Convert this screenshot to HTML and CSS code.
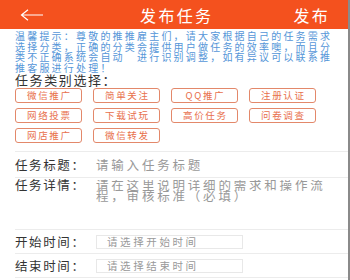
FILE: index.html
```html
<!DOCTYPE html>
<html lang="zh-CN">
<head>
<meta charset="UTF-8">
<meta name="viewport" content="width=device-width, initial-scale=1.0">
<title>发布任务</title>
<link rel="stylesheet" href="styles.css">
</head>
<body>
    <div class="page">
        <!-- 顶部导航 -->
        <div class="topbar">
            <span class="back">
                <svg width="24" height="12" viewBox="0 0 24 12">
                    <path d="M23 6H1.5M8 0.8L1.5 6L8 11.2" fill="none" stroke="#fff" stroke-width="1.2"/>
                </svg>
            </span>
            <span class="topbar-title">发布任务</span>
            <span class="topbar-action">发布</span>
        </div>

        <!-- 温馨提示 -->
        <p class="notice">温馨提示：尊敬的推推雇主们，请大家根据自己的任务需求选择分类，正确的分类会提供用户做任务的效率噢，而且分类不正确系统会自动　进行识别调整，如有异议可以联系推推客服进行处理！</p>

        <!-- 任务类别 -->
        <div class="category">
            <div class="category-title">任务类别选择：</div>
            <div class="tags">
                <span class="tag">微信推广</span>
                <span class="tag">简单关注</span>
                <span class="tag">QQ推广</span>
                <span class="tag">注册认证</span>
                <span class="tag">网络投票</span>
                <span class="tag">下载试玩</span>
                <span class="tag">高价任务</span>
                <span class="tag">问卷调查</span>
                <span class="tag">网店推广</span>
                <span class="tag">微信转发</span>
            </div>
        </div>

        <!-- 表单 -->
        <div class="row row-title">
            <label class="label" for="title">任务标题：</label>
            <input class="field" type="text" id="title" placeholder="请输入任务标题">
        </div>
        <div class="row row-detail">
            <label class="label" for="detail">任务详情：</label>
            <textarea class="field detail" id="detail" placeholder="请在这里说明详细的需求和操作流程，审核标准（必填）"></textarea>
        </div>
        <div class="row row-time">
            <label class="label" for="start">开始时间：</label>
            <input class="time" type="text" id="start" placeholder="请选择开始时间">
        </div>
        <div class="row row-time">
            <label class="label" for="end">结束时间：</label>
            <input class="time" type="text" id="end" placeholder="请选择结束时间">
        </div>
    </div>
</body>
</html>
```

FILE: styles.css
```css
body {
    margin: 0;
    font-family: "Noto Sans CJK SC", "Noto Sans", sans-serif;
    background: #fff;
}

.page {
    width: 350px;
    height: 280px;
    box-sizing: border-box;
    border-right: 2px solid #8a8a8a;
    overflow: hidden;
}

.topbar {
    height: 29px;
    background: #f4511e;
    color: #fff;
    display: flex;
    align-items: center;
    justify-content: space-between;
    padding: 0 18px 0 20px;
}

.back {
    display: flex;
    width: 24px;
}

.topbar-title {
    font-size: 16px;
    letter-spacing: 2.3px;
    margin-left: 16px;
}

.topbar-action {
    font-size: 16px;
    letter-spacing: 2.3px;
}

.notice {
    margin: 0;
    padding: 2px 10px 0 15px;
    font-size: 10px;
    line-height: 10.5px;
    letter-spacing: 2.2px;
    color: #5596d8;
}

.category {
    margin-left: 15px;
    padding-bottom: 8px;
    border-bottom: 1px solid #ececec;
}

.category-title {
    margin-top: 1px;
    font-size: 13px;
    line-height: 12px;
    letter-spacing: 1.6px;
    color: #333;
}

.tags {
    margin-top: 2px;
    display: grid;
    grid-template-columns: repeat(4, 67px);
    column-gap: 11px;
    row-gap: 5px;
}

.tag {
    height: 15px;
    box-sizing: border-box;
    border: 1px solid #e3886a;
    border-radius: 3px;
    font-size: 9.5px;
    line-height: 13px;
    letter-spacing: 1.7px;
    text-indent: 1.7px;
    color: #e8704c;
    text-align: center;
}

.row {
    margin-left: 15px;
    display: flex;
    border-bottom: 1px solid #ececec;
}

.label {
    width: 81px;
    flex-shrink: 0;
    font-size: 12.5px;
    letter-spacing: 1.6px;
    color: #333;
}

.field {
    border: none;
    outline: none;
    padding: 0;
    margin: 0;
    font-family: inherit;
    font-size: 12.5px;
    letter-spacing: 2.8px;
    color: #333;
    background: transparent;
}

.field::placeholder {
    color: #999;
}

.row-title {
    height: 25px;
    align-items: center;
}

.row-title .field {
    width: 230px;
}

.row-detail {
    height: 52px;
    padding-top: 2px;
    box-sizing: border-box;
}

.row-detail .label {
    line-height: 10.5px;
}

.detail {
    width: 242px;
    height: 40px;
    line-height: 10.5px;
    resize: none;
}

.row-time {
    height: 23px;
    align-items: center;
}

.time {
    width: 147px;
    height: 14px;
    box-sizing: border-box;
    border: 1px solid #e8e8e8;
    padding: 0 0 0 10px;
    margin: 0;
    outline: none;
    font-family: inherit;
    font-size: 10.5px;
    letter-spacing: 2.6px;
    color: #333;
}

.time::placeholder {
    color: #999;
}
```
